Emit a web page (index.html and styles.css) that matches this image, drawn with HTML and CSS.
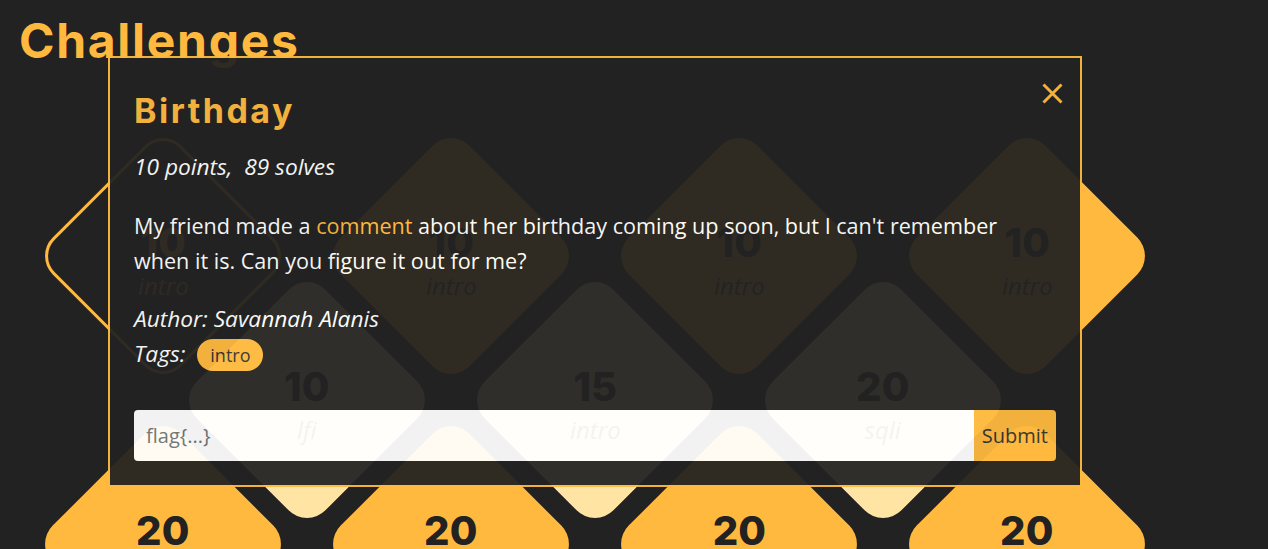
FILE: index.html
```html
<!DOCTYPE html>
<html lang="en">
<head>
<meta charset="utf-8">
<title>Challenges</title>
<link rel="stylesheet" href="styles.css">
</head>
<body class="modal-open">
<main class="page">
  <h1 class="page-title">Challenges</h1>
  <section class="board">
    <div class="row">
      <div class="tile tile-open"><div class="tile-body"><span class="tile-points">10</span><span class="tile-cat">intro</span></div></div>
      <div class="tile tile-solved"><div class="tile-body"><span class="tile-points">10</span><span class="tile-cat">intro</span></div></div>
      <div class="tile tile-solved"><div class="tile-body"><span class="tile-points">10</span><span class="tile-cat">intro</span></div></div>
      <div class="tile tile-solved"><div class="tile-body"><span class="tile-points">10</span><span class="tile-cat">intro</span></div></div>
    </div>
    <div class="row row-offset">
      <div class="tile tile-pale"><div class="tile-body"><span class="tile-points">10</span><span class="tile-cat">lfi</span></div></div>
      <div class="tile tile-pale"><div class="tile-body"><span class="tile-points">15</span><span class="tile-cat">intro</span></div></div>
      <div class="tile tile-pale"><div class="tile-body"><span class="tile-points">20</span><span class="tile-cat">sqli</span></div></div>
    </div>
    <div class="row">
      <div class="tile tile-solved"><div class="tile-body"><span class="tile-points">20</span><span class="tile-cat">web</span></div></div>
      <div class="tile tile-solved"><div class="tile-body"><span class="tile-points">20</span><span class="tile-cat">web</span></div></div>
      <div class="tile tile-solved"><div class="tile-body"><span class="tile-points">20</span><span class="tile-cat">crypto</span></div></div>
      <div class="tile tile-solved"><div class="tile-body"><span class="tile-points">20</span><span class="tile-cat">web</span></div></div>
    </div>
  </section>
</main>

<div class="modal" role="dialog" aria-labelledby="modal-title">
  <button class="modal-close" type="button" aria-label="Close">
    <svg width="21" height="21" viewBox="0 0 21 21"><path d="M1.5 1.5 L19.5 19.5 M19.5 1.5 L1.5 19.5" stroke="#ffb93f" stroke-width="3" fill="none"/></svg>
  </button>
  <h2 class="modal-title" id="modal-title">Birthday</h2>
  <p class="modal-meta">10 points,&nbsp; 89 solves</p>
  <p class="modal-desc">My friend made a <a href="#" class="modal-link">comment</a> about her birthday coming up soon, but I can't remember when it is. Can you figure it out for me?</p>
  <p class="modal-info">Author: Savannah Alanis<br>Tags: <span class="tag">intro</span></p>
  <form class="flag-form">
    <input class="flag-input" type="text" placeholder="flag{...}">
    <button class="flag-submit" type="button">Submit</button>
  </form>
</div>
</body>
</html>
```

FILE: styles.css
```css
html, body {
  margin: 0;
  padding: 0;
}

body {
  background: #222222;
  color: #ffffff;
  font-family: "Open Sans", "Noto Sans", sans-serif;
}

body.modal-open {
  overflow: hidden;
  height: 549px;
}

.page {
  padding: 12px 0 0 19px;
}

.page-title {
  margin: 0;
  font-family: "Inter", "Liberation Sans", sans-serif;
  font-weight: 700;
  font-size: 48px;
  line-height: 57.6px;
  letter-spacing: 1.7px;
  color: #ffb93f;
}

.board {
  margin-top: 95px;
  padding-left: 52.5px;
}

.row {
  display: flex;
  gap: 106px;
}

.row + .row {
  margin-top: -38px;
}

.row-offset {
  padding-left: 144px;
}

.tile {
  flex: none;
  width: 182px;
  height: 182px;
  box-sizing: border-box;
  border-radius: 26px;
  transform: rotate(45deg);
  display: flex;
  align-items: center;
  justify-content: center;
}

.tile-solved {
  background: #ffb93f;
  color: #222222;
}

.tile-pale {
  background: #ffe4a3;
  color: #222222;
}

.tile-open {
  background: #222222;
  border: 3px solid #ffb93f;
  color: #ffb93f;
}

.tile-body {
  transform: rotate(-45deg) translateY(6px);
  display: flex;
  flex-direction: column;
  align-items: center;
  gap: 8px;
}

.tile-points {
  font-family: "Inter", "Liberation Sans", sans-serif;
  font-weight: 800;
  font-size: 40px;
  line-height: 40px;
}

.tile-cat {
  font-style: italic;
  font-size: 24px;
  line-height: 30px;
  opacity: 0.9;
}

.modal {
  position: fixed;
  left: 108px;
  top: 56px;
  width: 974px;
  height: 431px;
  box-sizing: border-box;
  border: 2px solid #ffb93f;
  background: #222222;
  opacity: 0.94;
  padding: 34px 24px 24px 24px;
}

.modal-close {
  position: absolute;
  top: 25px;
  right: 17px;
  padding: 0;
  border: 0;
  background: transparent;
  width: 21px;
  height: 21px;
  display: flex;
}

.modal-title {
  margin: 0;
  font-family: "Inter", "Liberation Sans", sans-serif;
  font-weight: 700;
  font-size: 34px;
  line-height: 38px;
  letter-spacing: 2.5px;
  color: #ffb93f;
}

.modal-meta,
.modal-desc,
.modal-info {
  line-height: 35px;
}

.modal-meta {
  margin: 19px 0 0;
  font-style: italic;
  font-size: 22.7px;
}

.modal-desc {
  margin: 24px 0 0;
  font-size: 21.6px;
  max-width: 895px;
}

.modal-link {
  color: #ffb93f;
  text-decoration: none;
}

.modal-info {
  margin: 23px 0 0;
  font-style: italic;
  font-size: 22.7px;
}

.tag {
  display: inline-block;
  margin-left: 6px;
  padding: 3px 13px;
  border-radius: 16px;
  background: #ffb93f;
  color: #333333;
  font-style: normal;
  font-size: 18px;
  line-height: 26px;
}

.flag-form {
  display: flex;
  margin-top: 39px;
  height: 51px;
}

.flag-input {
  flex: 1;
  min-width: 0;
  border: 0;
  border-radius: 4px 0 0 4px;
  background: #ffffff;
  padding: 0 12px;
  font-family: "Open Sans", "Noto Sans", sans-serif;
  font-size: 20px;
  color: #333333;
}

.flag-input::placeholder {
  color: #6c757d;
}

.flag-submit {
  border: 0;
  border-radius: 0 4px 4px 0;
  background: #ffb93f;
  color: #333333;
  padding: 0 8px;
  font-family: "Open Sans", "Noto Sans", sans-serif;
  font-size: 20px;
}
```
